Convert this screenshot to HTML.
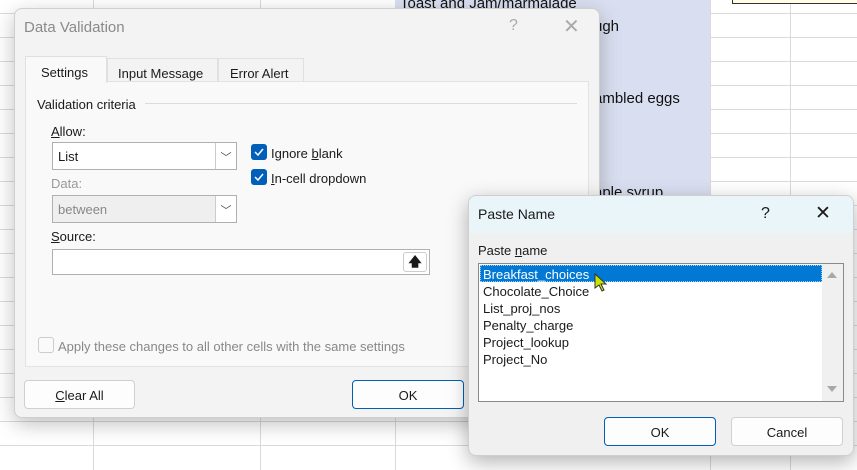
<!DOCTYPE html>
<html><head><meta charset="utf-8"><style>
*{box-sizing:border-box;margin:0;padding:0}
body{width:857px;height:470px;overflow:hidden;background:#fff;font-family:"Liberation Sans",sans-serif;font-size:13px;color:#1a1a1a;position:relative}
.a{position:absolute}
.vl{position:absolute;top:0;height:470px;width:1px;background:#dadada}
.hl{position:absolute;left:0;width:857px;height:1px;background:#dadada}
.btn{position:absolute;background:#fdfdfd;border:1px solid #d0d0d0;border-radius:4px;text-align:center;font-size:13px}
.cb{position:absolute;width:16px;height:16px;border-radius:3px;background:#005fb8}
.u{text-decoration:underline}
</style></head><body>
<div class="hl" style="top:13px"></div><div class="hl" style="top:37px"></div><div class="hl" style="top:61px"></div><div class="hl" style="top:85px"></div><div class="hl" style="top:109px"></div><div class="hl" style="top:133px"></div><div class="hl" style="top:157px"></div><div class="hl" style="top:181px"></div><div class="hl" style="top:205px"></div><div class="hl" style="top:229px"></div><div class="hl" style="top:253px"></div><div class="hl" style="top:277px"></div><div class="hl" style="top:301px"></div><div class="hl" style="top:325px"></div><div class="hl" style="top:349px"></div><div class="hl" style="top:373px"></div><div class="hl" style="top:397px"></div><div class="hl" style="top:421px"></div><div class="hl" style="top:445px"></div>
<div class="vl" style="left:93px"></div><div class="vl" style="left:260px"></div><div class="vl" style="left:395px"></div><div class="vl" style="left:710px"></div><div class="vl" style="left:790px"></div>
<div class="a" style="left:395px;top:0;width:315px;height:195px;background:#d9dff0"></div>
<div class="a" style="left:732px;top:-2px;width:130px;height:6px;background:#fffde6;border:1px solid #333"></div>
<div class="a" style="left:400px;top:-5px;font-size:15px;color:#111">Toast and Jam/marmalade</div>
<div class="a" style="left:594px;top:18px;font-size:15px;color:#111">ugh</div>
<div class="a" style="left:594px;top:90px;font-size:15px;color:#111">ambled eggs</div>
<div class="a" style="left:594px;top:184px;font-size:15px;color:#111">aple syrup</div>

<!-- Data Validation -->
<div class="a" style="left:14px;top:8px;width:586px;height:410px;background:#f3f3f3;border:1px solid #cfcfcf;border-radius:8px;box-shadow:0 6px 20px rgba(0,0,0,.25)">
 <div class="a" style="left:9px;top:10px;font-size:15px;color:#8a8a8a">Data Validation</div>
 <div class="a" style="left:494px;top:8px;font-size:16px;color:#aaa">?</div>
 <div class="a" style="left:548px;top:5px;font-size:20px;color:#aaa">✕</div>
 <div class="a" style="left:10px;top:72px;width:564px;height:286px;background:#f9f9f9;border:1px solid #e3e3e3"></div>
 <div class="a" style="left:10px;top:47px;width:82px;height:27px;background:#f9f9f9;border:1px solid #e0e0e0;border-bottom:none;padding:8px 0 0 15px">Settings</div>
 <div class="a" style="left:92px;top:49px;width:111px;height:24px;border:1px solid #e0e0e0;border-bottom:none;padding:7px 0 0 10px">Input Message</div>
 <div class="a" style="left:203px;top:49px;width:86px;height:24px;border:1px solid #e0e0e0;border-bottom:none;padding:7px 0 0 11px">Error Alert</div>
 <div class="a" style="left:22px;top:88px">Validation criteria</div>
 <div class="a" style="left:130px;top:94px;width:432px;height:1px;background:#dcdcdc"></div>
 <div class="a" style="left:36px;top:115px"><span class="u">A</span>llow:</div>
 <div class="a" style="left:37px;top:133px;width:185px;height:28px;background:#fff;border:1px solid #b0b0b0;padding:6px 0 0 5px">List<div class="a" style="right:0;top:0;width:21px;height:26px;border-left:1px solid #ccc;text-align:center;color:#555;font-size:11px;padding-top:6px">﹀</div></div>
 <div class="a" style="left:36px;top:167px;color:#999">Data:</div>
 <div class="a" style="left:37px;top:186px;width:185px;height:28px;background:#efefef;border:1px solid #b0b0b0;padding:6px 0 0 5px;color:#888">between<div class="a" style="right:0;top:0;width:21px;height:26px;border-left:1px solid #ccc;background:#fff;text-align:center;color:#555;font-size:11px;padding-top:6px">﹀</div></div>
 <div class="a" style="left:36px;top:220px"><span class="u">S</span>ource:</div>
 <div class="a" style="left:37px;top:240px;width:378px;height:26px;background:#fff;border:1px solid #b0b0b0"><div class="a" style="right:2px;top:2px;width:24px;height:20px;border:1px solid #ccc;border-radius:3px;text-align:center;font-weight:bold;font-size:13px">&#129093;</div></div>
 <div class="cb" style="left:236px;top:135px"><svg width="16" height="16"><path d="M4 8l3 3 5-6" stroke="#fff" stroke-width="1.5" fill="none"/></svg></div>
 <div class="a" style="left:256px;top:137px">Ignore <span class="u">b</span>lank</div>
 <div class="cb" style="left:236px;top:160px"><svg width="16" height="16"><path d="M4 8l3 3 5-6" stroke="#fff" stroke-width="1.5" fill="none"/></svg></div>
 <div class="a" style="left:256px;top:162px"><span class="u">I</span>n-cell dropdown</div>
 <div class="a" style="left:23px;top:328px;width:16px;height:16px;border:1px solid #ccc;border-radius:3px;background:#fafafa"></div>
 <div class="a" style="left:43px;top:330px;color:#888">Apply these changes to all other cells with the same settings</div>
 <div class="btn" style="left:9px;top:371px;width:111px;height:29px;padding-top:7px"><span class="u">C</span>lear All</div>
 <div class="btn" style="left:337px;top:371px;width:112px;height:29px;padding-top:7px;border-color:#005fb8">OK</div>
</div>

<!-- Paste Name -->
<div class="a" style="left:468px;top:195px;width:386px;height:261px;background:#f0f0f0;border:1px solid #cfcfcf;border-radius:8px;overflow:hidden;box-shadow:0 6px 20px rgba(0,0,0,.3)">
 <div class="a" style="left:0;top:0;width:386px;height:37px;background:#e9f5f9"></div>
 <div class="a" style="left:9px;top:10px;font-size:14px">Paste Name</div>
 <div class="a" style="left:292px;top:9px;font-size:16px">?</div>
 <div class="a" style="left:346px;top:6px;font-size:19px">✕</div>
 <div class="a" style="left:9px;top:47px">Paste <span class="u">n</span>ame</div>
 <div class="a" style="left:9px;top:67px;width:366px;height:139px;background:#fff;border:1px solid #8a8a8a">
  <div class="a" style="left:1px;top:1px;width:342px;height:17px;background:#0078d4;border:1px dotted #9cf"></div>
  <div class="a" style="left:4px;top:2px;line-height:17px;font-size:13px">
   <div style="color:#fff">Breakfast_choices</div><div>Chocolate_Choice</div><div>List_proj_nos</div><div>Penalty_charge</div><div>Project_lookup</div><div>Project_No</div>
  </div>
  <div class="a" style="right:0;top:0;width:21px;height:137px;background:#f0f0f0"><svg width="21" height="137"><path d="M5 14l5-6 5 6z M5 122l5 6 5-6z" fill="#a8a8a8"/></svg></div>
 </div>
 <svg class="a" style="left:125px;top:77px" width="14" height="20"><path d="M1 1v14l4-3 3 6 2-1-3-6h5z" fill="#c8e600" stroke="#333" stroke-width="1"/></svg>
 <div class="btn" style="left:135px;top:221px;width:112px;height:29px;padding-top:7px;border-color:#005fb8">OK</div>
 <div class="btn" style="left:262px;top:221px;width:112px;height:29px;padding-top:7px">Cancel</div>
</div>
</body></html>
